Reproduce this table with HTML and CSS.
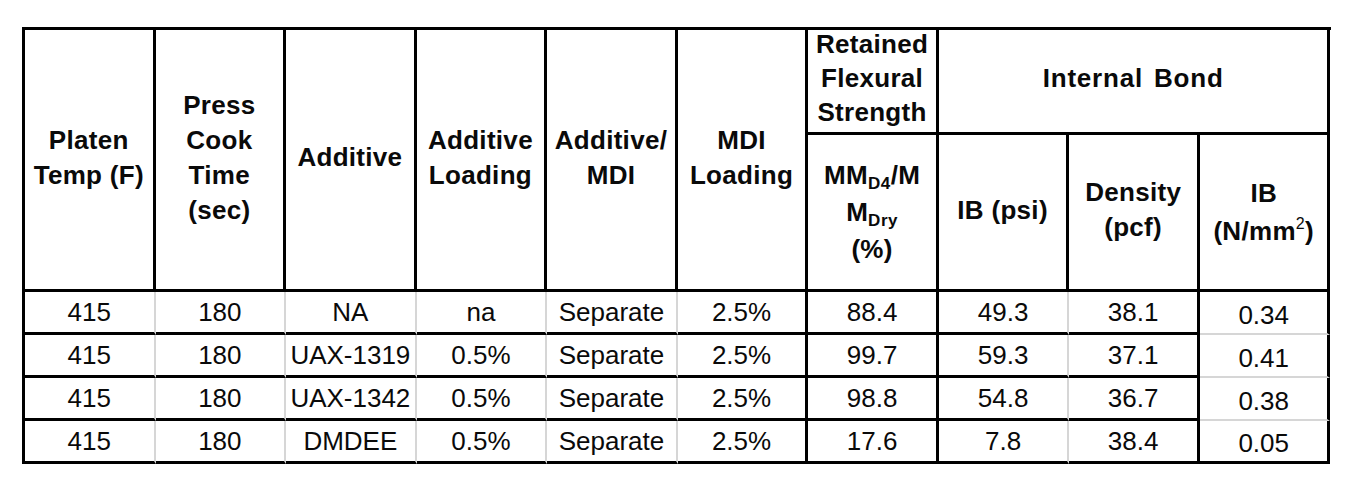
FILE: index.html
```html
<!DOCTYPE html>
<html lang="en">
<head>
<meta charset="utf-8">
<title>Internal Bond Results</title>
<link rel="stylesheet" href="styles.css">
</head>
<body>
<div class="tbl" role="table">
  <div class="c h span2"><span>Platen<br>Temp (F)</span></div>
  <div class="c h span2"><span>Press<br>Cook<br>Time<br>(sec)</span></div>
  <div class="c h span2"><span>Additive</span></div>
  <div class="c h span2"><span>Additive<br>Loading</span></div>
  <div class="c h span2"><span>Additive/<br>MDI</span></div>
  <div class="c h span2"><span>MDI<br>Loading</span></div>
  <div class="c h top"><span>Retained<br>Flexural<br>Strength</span></div>
  <div class="c h top wide"><span class="spaced">Internal Bond</span></div>
  <div class="c h sub"><span>MM<sub>D4</sub>/M<br>M<sub>Dry</sub><br>(%)</span></div>
  <div class="c h"><span>IB (psi)</span></div>
  <div class="c h"><span>Density<br>(pcf)</span></div>
  <div class="c h unit"><span>IB<br>(N/mm<sup>2</sup>)</span></div>

  <div class="c d g">415</div><div class="c d g">180</div><div class="c d g">NA</div><div class="c d g">na</div><div class="c d g">Separate</div><div class="c d">2.5%</div><div class="c d">88.4</div><div class="c d g">49.3</div><div class="c d">38.1</div><div class="c d e">0.34</div>
  <div class="c d g">415</div><div class="c d g">180</div><div class="c d g">UAX-1319</div><div class="c d g">0.5%</div><div class="c d g">Separate</div><div class="c d">2.5%</div><div class="c d">99.7</div><div class="c d g">59.3</div><div class="c d">37.1</div><div class="c d e">0.41</div>
  <div class="c d g">415</div><div class="c d g">180</div><div class="c d g">UAX-1342</div><div class="c d g">0.5%</div><div class="c d g">Separate</div><div class="c d">2.5%</div><div class="c d">98.8</div><div class="c d g">54.8</div><div class="c d">36.7</div><div class="c d e">0.38</div>
  <div class="c d g">415</div><div class="c d g">180</div><div class="c d g">DMDEE</div><div class="c d g">0.5%</div><div class="c d g">Separate</div><div class="c d">2.5%</div><div class="c d">17.6</div><div class="c d g">7.8</div><div class="c d">38.4</div><div class="c d e end">0.05</div>
</div>
</body>
</html>
```

FILE: styles.css
```css
html, body {
  margin: 0;
  padding: 0;
  background: #ffffff;
}

body {
  font-family: "Liberation Sans", Arial, sans-serif;
  color: #0a0a0a;
}

.tbl {
  display: grid;
  grid-template-columns: repeat(10, 130.55px);
  grid-template-rows: 105px 157px repeat(4, 43px);
  width: 1305.5px;
  margin: 27px 0 0 22px;
  border-left: 3px solid #000;
  border-top: 3px solid #000;
}

.c {
  box-sizing: border-box;
  border-right: 3px solid #000;
  border-bottom: 3px solid #000;
  display: flex;
  align-items: center;
  justify-content: center;
  text-align: center;
  font-size: 26px;
}

.h {
  font-weight: bold;
  line-height: 35px;
  letter-spacing: 0.3px;
  padding-bottom: 4px;
}

.span2 {
  grid-row: span 2;
}

.top {
  line-height: 34px;
  padding-bottom: 6px;
}

.wide {
  grid-column: span 3;
}

.spaced {
  letter-spacing: 0.8px;
  word-spacing: 3px;
}

.sub {
  line-height: 37px;
  padding-bottom: 0;
}

.unit {
  line-height: 38px;
  padding-bottom: 0;
}

.h sub {
  font-size: 17px;
  line-height: 0;
  vertical-align: -5px;
  letter-spacing: 0.5px;
}

.h sup {
  font-size: 16px;
  font-weight: normal;
  line-height: 0;
  vertical-align: 11px;
}

.d {
  font-weight: normal;
  line-height: 30px;
}

.d.g {
  border-right: 2px solid #d6d6d6;
}

.d.e {
  border-bottom: 2px solid #d6d6d6;
  padding-top: 4px;
}

.d.e.end {
  border-bottom: 3px solid #000;
}
```
